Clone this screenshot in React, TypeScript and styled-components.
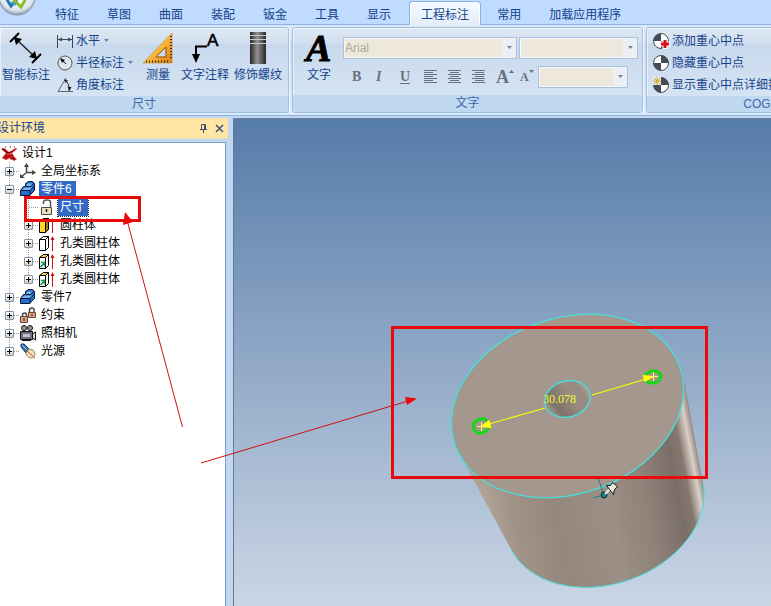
import React from "react";
import styled, { createGlobalStyle, css } from "styled-components";

const ui = `"Liberation Sans", "Noto Sans CJK SC", sans-serif`;

const GlobalStyle = createGlobalStyle`
  *, *::before, *::after { box-sizing: border-box; }
  html, body { margin: 0; height: 100%; overflow: hidden; }
  body { font: 12px/16px ${ui}; color: #000; background: #bfdbff; }
  #root { height: 100%; }
  button, select { font: inherit; color: inherit; }
`;

const Window = styled.div`
  position: relative;
  height: 100vh;
  display: flex;
  flex-direction: column;
  overflow: hidden;
`;

const TabBar = styled.header`
  display: flex;
  flex: none;
  height: 25px;
  padding-left: 41px;
  align-items: stretch;
  background: #bfdbff;
  border-bottom: 1px solid #8db2e3;
  position: relative;
  z-index: 1;
`;

const AppButton = styled.button`
  position: absolute;
  left: -2px;
  top: -22px;
  width: 38px;
  height: 38px;
  padding: 0;
  border: 0;
  background: none;
  svg { display: block; }
`;

const TabList = styled.nav`
  display: flex;
`;

const Tab = styled.button<{ $active?: boolean }>`
  flex: none;
  border: 0;
  padding: 5px 14px 0;
  background: none;
  color: #15428b;
  white-space: nowrap;
  ${(p) =>
    p.$active &&
    css`
      margin: 1px 2px -1px 4px;
      padding: 2px 11px 0;
      border: 1px solid #8db2e3;
      border-bottom: 0;
      border-radius: 4px 4px 0 0;
      background: linear-gradient(#f6faff, #e3edf8);
      box-shadow: inset 1px 1px 0 #fff, inset -1px 0 0 #fff;
    `}
`;

const Ribbon = styled.section`
  display: flex;
  flex: none;
  gap: 3px;
  height: 91px;
  padding: 2px 0;
  background: linear-gradient(#dfe9f5 0, #d3e1f0 16px, #c9daed 17px, #dcebfa 100%);
  border-bottom: 1px solid #8db2e3;
`;

const Group = styled.section<{ $first?: boolean; $min?: number }>`
  display: flex;
  flex: none;
  flex-direction: column;
  min-width: ${(p) => p.$min ?? 0}px;
  border: 1px solid #a3c0e0;
  border-left-width: ${(p) => (p.$first ? 0 : 1)}px;
  border-radius: ${(p) => (p.$first ? "0 3px 3px 0" : "3px")};
  background: linear-gradient(#dee8f4 0, #d2dfef 15px, #c8d9ed 16px, #d9e7f5 100%);
  box-shadow: inset 1px 1px 0 rgba(255, 255, 255, 0.5), 1px 0 0 #f1f7fd;
  overflow: hidden;
`;

const GroupBody = styled.div`
  display: flex;
  flex: 1;
  padding: 2px 4px 0 2px;
  color: #15428b;
`;

const GroupCaption = styled.h2`
  margin: 0;
  height: 17px;
  font: inherit;
  line-height: 17px;
  text-align: center;
  color: #3e6aaa;
  background: #c1d8f1;
`;

const BigButton = styled.button<{ $w: number }>`
  display: flex;
  flex: none;
  flex-direction: column;
  align-items: center;
  gap: 3px;
  width: ${(p) => p.$w}px;
  padding: 2px 0 0;
  border: 0;
  background: none;
  white-space: nowrap;
  svg { display: block; }
`;

const Stack = styled.div<{ $pad: string }>`
  display: grid;
  grid-auto-rows: 22px;
  align-content: start;
  padding: ${(p) => p.$pad};
`;

const SmallButton = styled.button`
  display: flex;
  align-items: center;
  gap: 3px;
  padding: 0;
  border: 0;
  background: none;
  white-space: nowrap;
  svg { flex: none; }
`;

const CogButton = styled(SmallButton)`
  gap: 2px;
`;

const TextControls = styled.div`
  display: grid;
  align-content: start;
  gap: 7px;
  padding: 7px 0 0;
`;

const ControlRow = styled.div`
  display: flex;
  align-items: center;
  gap: 2px;
`;

const ComboFrame = styled.label<{ $w: number }>`
  display: grid;
  grid-template-columns: 1fr 14px;
  align-items: center;
  width: ${(p) => p.$w}px;
  height: 22px;
  border: 1px solid #abc1de;
  background: #eff3f8;
  svg { grid-area: 1 / 2; justify-self: center; pointer-events: none; z-index: 1; }
`;

const Combo = styled.select`
  grid-area: 1 / 1 / 2 / 3;
  width: 100%;
  height: 20px;
  padding: 0 14px 0 0;
  border: 1px solid #f5f7fa;
  border-right: 14px solid #eceff3;
  border-radius: 0;
  appearance: none;
  background: #ede8db;
  color: #aaa9a0;
  opacity: 1;
`;

const FormatRow = styled(ControlRow)`
  gap: 0;
`;

const FormatButton = styled.button<{ $w?: number }>`
  display: grid;
  place-items: center start;
  width: ${(p) => p.$w ?? 24}px;
  height: 22px;
  padding: 0 0 0 9px;
  border: 0;
  background: none;
  color: #66717f;
  font: bold 14px/20px "Liberation Serif", serif;
  svg { display: block; }
`;

const Italic = styled.i`
  font-weight: bold;
`;
const Underline = styled.span`
  border-bottom: 1px solid #66717f;
  line-height: 12px;
`;

const Workspace = styled.main`
  display: flex;
  flex: 1;
  min-height: 0;
  padding-top: 2px;
  background: #bfd7f2;
`;

const Panel = styled.aside`
  display: flex;
  flex: none;
  flex-direction: column;
  width: 228px;
`;

const PanelHeader = styled.header`
  display: flex;
  align-items: center;
  height: 21px;
  flex: none;
  margin-bottom: 3px;
  padding-right: 1px;
  background: #ffe6a4;
  color: #15428b;
  border-bottom: 1px solid #e9dcb8;
`;

const PanelTitle = styled.h1`
  flex: 1;
  margin: 0 0 0 -3px;
  font: inherit;
`;

const IconButton = styled.button`
  display: grid;
  place-items: center;
  width: 16px;
  height: 16px;
  padding: 0;
  border: 0;
  background: none;
`;

const Tree = styled.ul`
  flex: 1;
  margin: 0 2px 0 0;
  padding: 1px 0 0 1px;
  list-style: none;
  background: #fff;
  border-top: 1px solid #7ba0c8;
  border-right: 1px solid #7ba0c8;
`;

const Row = styled.li`
  display: flex;
  align-items: center;
  height: 18px;
  > svg { flex: none; }
`;

const dots = "repeating-linear-gradient(#9a9a9a 0 1px, transparent 1px 2px)";
const hdots = "repeating-linear-gradient(90deg, #9a9a9a 0 1px, transparent 1px 2px)";

const Guide = styled.span<{ $line: "none" | "full" | "half"; $branch?: boolean }>`
  display: grid;
  place-items: center start;
  flex: none;
  width: 19px;
  height: 18px;
  padding: 1px 0 0 4px;
  background-repeat: no-repeat;
  background-image: ${dots}, ${hdots};
  background-position: 8px 0, 9px 9px;
  background-size: 1px ${(p) => ({ none: "0", full: "18px", half: "9px" })[p.$line]},
    ${(p) => (p.$branch ? "9px 1px" : "0 0")};
`;

const Toggle = styled.button`
  display: block;
  width: 9px;
  height: 9px;
  padding: 0;
  border: 1px solid #7d93ac;
  border-radius: 1px;
  background: linear-gradient(#fff, #d5d0c4);
  svg { display: block; }
`;

const Label = styled.span<{ $state?: "selected" | "focused" }>`
  margin-left: 3px;
  padding: 0 2px 0 2px;
  line-height: 16px;
  white-space: nowrap;
  ${(p) => p.$state && css`color: #fff; background: #316ac5; padding-right: 4px;`}
  ${(p) => p.$state === "focused" && css`outline: 1px dotted #12244a; line-height: 17px;`}
`;

const Viewport = styled.section`
  flex: 1;
  min-width: 0;
  margin: 0 0 0 5px;
  border-top: 1px solid #6f7f90;
  border-left: 1px solid #6c7886;
  background: linear-gradient(#567ca9, #cbd6e5);
  overflow: hidden;
  svg { display: block; }
`;

const Annotations = styled.svg`
  position: absolute;
  left: 0;
  top: 0;
  pointer-events: none;
  z-index: 2;
`;

const Caret = () => (
  <svg width="7" height="4" viewBox="0 0 7 4"><path d="M1 0h5L3.500 3z" fill="#6f84a4" /></svg>
);

const Logo = () => (
  <svg width="38" height="38" viewBox="0 0 38 38">
    <defs>
      <radialGradient id="orb" cx=".5" cy=".4" r=".6">
        <stop offset=".4" stopColor="#fff" /><stop offset=".8" stopColor="#dce3ea" /><stop offset="1" stopColor="#8795a6" />
      </radialGradient>
    </defs>
    <circle cx="19" cy="19" r="18" fill="url(#orb)" stroke="#8797ac" />
    <path d="M8 20l5 8 6-6" fill="none" stroke="#2b74b8" strokeWidth="3" />
    <path d="M15 21l8 8 7-12" fill="none" stroke="#8cbf2d" strokeWidth="3" />
    <path d="M13 24l5 3" stroke="#35a3c9" strokeWidth="2" />
  </svg>
);

const SmartDim = () => (
  <svg width="34" height="32" viewBox="0 0 34 32">
    <path d="M1 10L10 1M23 31l9-9" stroke="#000" strokeWidth="2" />
    <path d="M7 7l19 18" stroke="#222" strokeWidth="1.500" />
    <path d="M5 5l8 2-6 6zM28 27l-8-2 6-6z" fill="#000" />
  </svg>
);
const Horizontal = () => (
  <svg width="16" height="16" viewBox="0 0 16 16">
    <path d="M.5 2v13M15.500 2v13M1 6.500h14" stroke="#3d4654" fill="none" />
    <path d="M1 6.500l4-2v4zM15 6.500l-4-2v4z" fill="#3d4654" />
  </svg>
);
const Radius = () => (
  <svg width="16" height="16" viewBox="0 0 16 16">
    <circle cx="8" cy="8" r="7" fill="#dfe4ea" stroke="#555" />
    <path d="M9 9L5 5" stroke="#111" /><path d="M3 3l5 2-3 3z" fill="#111" />
  </svg>
);
const Angle = () => (
  <svg width="16" height="16" viewBox="0 0 16 16">
    <path d="M9 1L1 14.500h15" fill="none" stroke="#666" />
    <path d="M8 3q5 4 4 11" fill="none" stroke="#222" />
    <path d="M7 2l4 1.500-2.500 2.500zM10.500 10h4l-2 4z" fill="#222" />
  </svg>
);
const SetSquare = () => (
  <svg width="32" height="32" viewBox="0 0 32 32">
    <defs><linearGradient id="sq" x1="0" y1="0" x2="1" y2="1"><stop offset="0" stopColor="#ffe58a" /><stop offset=".55" stopColor="#f9b63d" /><stop offset="1" stopColor="#d77a12" /></linearGradient></defs>
    <path fillRule="evenodd" d="M30 1v30H1zM24 15v10H14z" fill="url(#sq)" stroke="#c58324" strokeWidth=".6" />
    <path d="M24 15v10H14z" fill="none" stroke="#9c5512" />
    <path d="M29 4v24" stroke="#3e2508" strokeWidth="2" strokeDasharray="1 2" />
    <path d="M4 29.500h24" stroke="#3e2508" strokeWidth="2" strokeDasharray="1 2" />
  </svg>
);
const NoteIcon = () => (
  <svg width="32" height="32" viewBox="0 0 32 32">
    <path d="M7 23V14.500h11" fill="none" stroke="#000" strokeWidth="2" />
    <path d="M3 22h8L7 31z" fill="#000" />
    <text x="18" y="14" fontSize="17" fontFamily="'Liberation Sans', sans-serif" stroke="#000" strokeWidth=".6">A</text>
  </svg>
);
const ThreadIcon = () => (
  <svg width="18" height="32" viewBox="0 0 18 32">
    <defs><linearGradient id="th"><stop offset="0" stopColor="#252525" /><stop offset=".45" stopColor="#929292" /><stop offset="1" stopColor="#262626" /></linearGradient></defs>
    <path d="M1 0h16v32H1z" fill="url(#th)" />
    <path d="M1 3.500h16M1 7.500h16M1 11.500h16" stroke="#c8c8c8" />
  </svg>
);
const TextIcon = () => (
  <svg width="32" height="32" viewBox="0 0 32 32">
    <g fontFamily="'Liberation Serif', serif" fontWeight="bold" fontStyle="italic" fontSize="38">
      <text x="4" y="29" fill="#eef3fa">A</text>
      <text x="3" y="29" fill="#000" stroke="#000">A</text>
    </g>
  </svg>
);

const AlignIcon = ({ mode }: { mode: "left" | "center" | "right" }) => {
  const x = { left: 0, center: 2, right: 3 }[mode];
  return (
    <svg width="13" height="14" viewBox="0 0 13 14">
      <path d={`M0 .5h13M${x} 2.500h9M0 4.500h13M${x} 6.500h9M0 8.500h13M${x} 10.500h9M0 12.500h13`} stroke="#66717f" />
    </svg>
  );
};

const FontGrow = styled.span<{ $small?: boolean }>`
  display: flex;
  align-items: flex-start;
  font: bold ${(p) => (p.$small ? 12 : 18)}px/18px "Liberation Serif", serif;
  svg { margin-top: 2px; }
`;

const Cog = ({ kind }: { kind: "add" | "hide" | "detail" }) => (
  <svg width="17" height="17" viewBox="0 0 17 17">
    <circle cx="8" cy="8" r="7.500" fill="#fff" stroke="#454b55" />
    <path d="M8 8V.5A7.500 7.500 0 0 0 .5 8zM8 8v7.500A7.500 7.500 0 0 0 15.500 8z" transform={kind === "add" ? undefined : "rotate(90 8 8)"} fill="#454b55" />
    {kind === "add" && <><path d="M12 6v10M7 11h10" stroke="#fff" strokeWidth="5" /><path d="M12 7v8M8 11h8" stroke="#d80f1a" strokeWidth="3" /></>}
    {kind === "detail" && <><path d="M0 0h8v8H0z" fill="#e7edf5" /><path d="M4 0v8M0 4h8M1 1l6 6M7 1L1 7" stroke="#d8a325" /></>}
  </svg>
);

type IconName = "design" | "axes" | "part" | "lock" | "solid" | "hole" | "holeLink" | "constraint" | "camera" | "light";

const Solid = ({ name }: { name: IconName }) => (
  <>
    <path d="M.5 4.500l4-3h5l-3 3z" fill={name === "hole" ? "#fff" : "#ffd731"} stroke="#000" />
    <path d="M.5 4.500h6v11h-6z" fill={name === "solid" ? "#ffd52c" : "#fff"} stroke="#000" />
    <path d="M6.500 4.500l3-3v11l-3 3z" fill={name === "solid" ? "#a07e13" : "#fff"} stroke="#000" />
    {name === "holeLink" && <path d="M1 8h5v7H1z" fill="#e5f7ea" />}
    {name === "holeLink" && <path d="M1.500 14l4-4M2 9.500h3.500V13" stroke="#19974b" strokeWidth="1.500" fill="none" />}
    <path d="M13.500 16V3" stroke="#cf1010" /><path d="M11.500 5l2-4 2 4z" fill="#cf1010" />
  </>
);

const drawings: Record<IconName, React.ReactNode> = {
  design: <>
    <path d="M0 4l3-1 5 4 7-4 1 1-5 4 3 5 2 1-3 2-4-3-4 2-4-2 4-5z" fill="#d01318" />
    <path d="M1 4l6 4 4-1M5 12l4-2M9 14l5-1" stroke="#5d0505" fill="none" />
    <path d="M6 10l5-2" stroke="#ff6462" />
    <path d="M4 2h1M9 2h1M13 2h1" stroke="#222" />
  </>,
  axes: <><path d="M6.500 10V3M6 9.500h8M6 10l-5 4" stroke="#444" strokeWidth="1.500" fill="none" /><path d="M4 4l2.500-4L9 4zM12 7l4 2.500-4 2.500zM0 11v4h5z" fill="#444" /></>,
  part: <>
    <path d="M.5 9.500l3-4 2 0 0-3 3-2h4l2 2v7l-5 5h-9z" fill="#2570ca" stroke="#07142f" />
    <path d="M5.500 5.500l2-3h5l-2 3z" fill="#74b6f4" />
    <path d="M1.500 9l3-2.500h8L10 9z" fill="#74b6f4" />
    <path d="M1 9.500h9v5M10 9.500l4-4M6 5.500h5l2-3" fill="none" stroke="#07142f" />
  </>,
  lock: <><path d="M4.500 5V3q0-2 3.500-2t3.500 2v5" fill="none" stroke="#555" strokeWidth="1.500" /><path d="M2.500 8.500h10v7h-10z" fill="#e8dfbf" stroke="#4d493e" /><path d="M7.500 10v3" stroke="#222" strokeWidth="1.500" /></>,
  solid: <Solid name="solid" />,
  hole: <Solid name="hole" />,
  holeLink: <Solid name="holeLink" />,
  constraint: <>
    <path d="M9.500 6V3q0-2 2.500-2t2 2v3M2.500 10V8q0-2 2-2t2 2v2" fill="none" stroke="#444" strokeWidth="1.500" />
    <path d="M8.500 5.500h7v5h-7zM.5 9.500h7v6h-7z" fill="#d99f7f" stroke="#65483a" />
    <path d="M12 7v2M4 11v3" stroke="#44261c" />
  </>,
  camera: <>
    <circle cx="4" cy="3" r="2.500" fill="#999" stroke="#111" /><circle cx="10" cy="3" r="2.500" fill="#999" stroke="#111" />
    <path d="M.5 6.500h12v8H.5z" fill="#716f7e" stroke="#111" /><path d="M3 9h7v3H3z" fill="#c4c1d2" />
    <path d="M12.500 9l3-2v8l-3-2z" fill="#ddd" stroke="#111" /><path d="M2 15.500h9" stroke="#111" />
  </>,
  light: <>
    <path d="M1 1h3l5 5-3 4-5-6z" fill="#3a6aa6" stroke="#173a68" /><path d="M2 2l5 5" stroke="#a9d1f2" />
    <path d="M6 10l3-4q5 0 6 4 0 5-4 5-5-1-5-5z" fill="#f4e1b7" stroke="#9b8d72" /><path d="M7 8l8 7" stroke="#c24e2b" />
  </>,
};

const TreeIcon = ({ name }: { name: IconName }) => (
  <svg width="16" height="16" viewBox="0 0 16 16">{drawings[name]}</svg>
);

type Node = { text: string; icon: IconName; depth: number; open?: boolean; leaf?: boolean; last?: boolean; state?: "selected" | "focused" };

const nodes: Node[] = [
  { text: "设计1", icon: "design", depth: 0 },
  { text: "全局坐标系", icon: "axes", depth: 1 },
  { text: "零件6", icon: "part", depth: 1, open: true, state: "selected" },
  { text: "尺寸", icon: "lock", depth: 2, leaf: true, state: "focused" },
  { text: "圆柱体", icon: "solid", depth: 2 },
  { text: "孔类圆柱体", icon: "hole", depth: 2 },
  { text: "孔类圆柱体", icon: "holeLink", depth: 2 },
  { text: "孔类圆柱体", icon: "holeLink", depth: 2, last: true },
  { text: "零件7", icon: "part", depth: 1 },
  { text: "约束", icon: "constraint", depth: 1 },
  { text: "照相机", icon: "camera", depth: 1 },
  { text: "光源", icon: "light", depth: 1, last: true },
];

const TreeRow = ({ node }: { node: Node }) => (
  <Row role="treeitem" aria-expanded={node.leaf ? undefined : !!node.open} aria-level={node.depth + 1}>
    {node.depth === 2 && <Guide $line="full" />}
    {node.depth > 0 && (
      <Guide $line={node.last ? "half" : "full"} $branch>
        {!node.leaf && (
          <Toggle aria-label={`${node.open ? "折叠" : "展开"} ${node.text}`}>
            <svg width="7" height="7" viewBox="0 0 7 7"><path d={node.open ? "M1 3.500h5" : "M1 3.500h5M3.500 1v5"} stroke="#000" /></svg>
          </Toggle>
        )}
      </Guide>
    )}
    <TreeIcon name={node.icon} />
    <Label $state={node.state}>{node.text}</Label>
  </Row>
);

const Model = () => (
  <svg width="537" height="487" viewBox="234 119 537 487" role="img" aria-label="圆柱体">
    <defs>
      <linearGradient id="body" gradientUnits="userSpaceOnUse" x1="490" y1="515" x2="703" y2="475">
        <stop offset="0" stopColor="#b0a197" />
        <stop offset=".1" stopColor="#a19388" />
        <stop offset=".3" stopColor="#94877d" />
        <stop offset=".55" stopColor="#9c8f85" />
        <stop offset=".72" stopColor="#8e8279" />
        <stop offset=".87" stopColor="#7a6e68" />
        <stop offset=".92" stopColor="#85796f" />
        <stop offset=".965" stopColor="#dacfc8" />
        <stop offset="1" stopColor="#85796f" />
      </linearGradient>
      <linearGradient id="bore" x1="0" y1=".6" x2="1" y2=".3">
        <stop offset="0" stopColor="#a39990" /><stop offset=".2" stopColor="#7c716a" />
        <stop offset=".6" stopColor="#9a8d83" /><stop offset=".8" stopColor="#968a80" /><stop offset="1" stopColor="#b3a79e" />
      </linearGradient>
    </defs>
    <path d="M460 455L511 549A102 75 -19 0 0 703 483L683 375z" fill="url(#body)" />
    <path d="M511 549A102 75 -19 0 0 703 483" fill="none" stroke="#45dfdc" />
    <ellipse cx="567.500" cy="406" rx="119" ry="88" transform="rotate(-19 567.500 406)" fill="#a4988e" stroke="#45dfdc" strokeWidth="1.300" />
    <ellipse cx="567.500" cy="399" rx="23" ry="18" transform="rotate(-16 567.500 399)" fill="url(#bore)" stroke="#45dfdc" strokeWidth="1.300" />
    <g fill="none" stroke="#12d912" strokeWidth="3">
      <ellipse cx="481" cy="426" rx="8" ry="7" transform="rotate(-19 481 426)" />
      <ellipse cx="653" cy="377" rx="8" ry="6" transform="rotate(-10 653 377)" />
    </g>
    <path d="M482 426L545 408M592 395L653 377" stroke="#ff0" strokeWidth="1.200" />
    <path d="M481 426.500l8-6 2 7zM653 376.500l-8 5-2-6z" fill="#ff0" stroke="#ff0" />
    <path d="M481.500 422v9M477 426.500h9M653.500 372v9M649 376.500h9" stroke="#fff36a" />
    <text x="543" y="403" fontSize="12" fontFamily="'Liberation Serif', serif" fill="#f2f52c">30.078</text>
    <path d="M598 478l6 17M593 498l11-3" stroke="#187e80" />
    <circle cx="604" cy="495" r="3" fill="#167b7d" stroke="#062d30" />
    <path d="M605 494l5-5" stroke="#eee" strokeWidth="2" />
    <path d="M606.500 485.500l4 0 2-3 5 4-3 3 -1 5z" fill="#ece9e4" stroke="#111" />
  </svg>
);

const tabs = ["特征", "草图", "曲面", "装配", "钣金", "工具", "显示", "工程标注", "常用", "加载应用程序"];

export default function App() {
  return (
    <>
      <GlobalStyle />
      <Window>
        <TabBar>
          <AppButton aria-label="菜单"><Logo /></AppButton>
          <TabList>
            {tabs.map((t) => <Tab key={t} $active={t === "工程标注"}>{t}</Tab>)}
          </TabList>
        </TabBar>
        <Ribbon>
          <Group $first>
            <GroupBody>
              <BigButton $w={48}><SmartDim />智能标注</BigButton>
              <Stack $pad="0 4px 0 7px">
                <SmallButton><Horizontal />水平<Caret /></SmallButton>
                <SmallButton><Radius />半径标注<Caret /></SmallButton>
                <SmallButton><Angle />角度标注</SmallButton>
              </Stack>
              <BigButton $w={40}><SetSquare />测量</BigButton>
              <BigButton $w={54}><NoteIcon />文字注释</BigButton>
              <BigButton $w={52}><ThreadIcon />修饰螺纹</BigButton>
            </GroupBody>
            <GroupCaption>尺寸</GroupCaption>
          </Group>
          <Group>
            <GroupBody>
              <BigButton $w={48}><TextIcon />文字</BigButton>
              <TextControls>
                <ControlRow>
                  <ComboFrame $w={174}><Combo disabled aria-label="字体"><option>Arial</option></Combo><Caret /></ComboFrame>
                  <ComboFrame $w={119}><Combo disabled aria-label="字号"><option></option></Combo><Caret /></ComboFrame>
                </ControlRow>
                <FormatRow>
                  <FormatButton aria-label="粗体" disabled>B</FormatButton>
                  <FormatButton aria-label="斜体" disabled><Italic>I</Italic></FormatButton>
                  <FormatButton aria-label="下划线" disabled><Underline>U</Underline></FormatButton>
                  <FormatButton aria-label="左对齐" disabled><AlignIcon mode="left" /></FormatButton>
                  <FormatButton aria-label="居中" disabled><AlignIcon mode="center" /></FormatButton>
                  <FormatButton aria-label="右对齐" disabled><AlignIcon mode="right" /></FormatButton>
                  <FormatButton aria-label="增大字体" disabled>
                    <FontGrow>A<svg width="5" height="3" viewBox="0 0 5 3"><path d="M0 3h5L2.500 0z" fill="#66717f" /></svg></FontGrow>
                  </FormatButton>
                  <FormatButton aria-label="缩小字体" $w={27} disabled>
                    <FontGrow $small>A<svg width="5" height="3" viewBox="0 0 5 3"><path d="M0 0h5L2.500 3z" fill="#66717f" /></svg></FontGrow>
                  </FormatButton>
                  <ComboFrame $w={90}><Combo disabled aria-label="颜色"><option></option></Combo><Caret /></ComboFrame>
                </FormatRow>
              </TextControls>
            </GroupBody>
            <GroupCaption>文字</GroupCaption>
          </Group>
          <Group $min={222}>
            <GroupBody>
              <Stack $pad="0 0 0 4px">
                <CogButton><Cog kind="add" />添加重心中点</CogButton>
                <CogButton><Cog kind="hide" />隐藏重心中点</CogButton>
                <CogButton><Cog kind="detail" />显示重心中点详细数据</CogButton>
              </Stack>
            </GroupBody>
            <GroupCaption>COG</GroupCaption>
          </Group>
        </Ribbon>
        <Workspace>
          <Panel>
            <PanelHeader>
              <PanelTitle>设计环境</PanelTitle>
              <IconButton aria-label="固定">
                <svg width="9" height="9" viewBox="0 0 9 9"><path d="M2.500 5V.5h4V5M5.500 0v5M1 5.500h7M4.500 6v3" fill="none" stroke="#3a5277" /></svg>
              </IconButton>
              <IconButton aria-label="关闭">
                <svg width="9" height="9" viewBox="0 0 9 9"><path d="M1 1l7 7M8 1L1 8" stroke="#3a5277" strokeWidth="1.500" /></svg>
              </IconButton>
            </PanelHeader>
            <Tree role="tree" aria-label="设计环境">
              {nodes.map((n, i) => <TreeRow key={i} node={n} />)}
            </Tree>
          </Panel>
          <Viewport><Model /></Viewport>
        </Workspace>
        <Annotations width="771" height="606" viewBox="0 0 771 606" aria-hidden="true">
          <g fill="none" stroke="#e90b0b" strokeWidth="3">
            <path d="M25.500 197.500h114v23h-114z" />
            <path d="M392.500 327.500h314v150h-314z" />
          </g>
          <path d="M182.500 427L127 220M201 463L408 401" stroke="#d01010" />
          <path d="M125 212l8 10-10 3zM417 398.500l-10 6.500-2-8z" fill="#ee0707" />
        </Annotations>
      </Window>
    </>
  );
}
